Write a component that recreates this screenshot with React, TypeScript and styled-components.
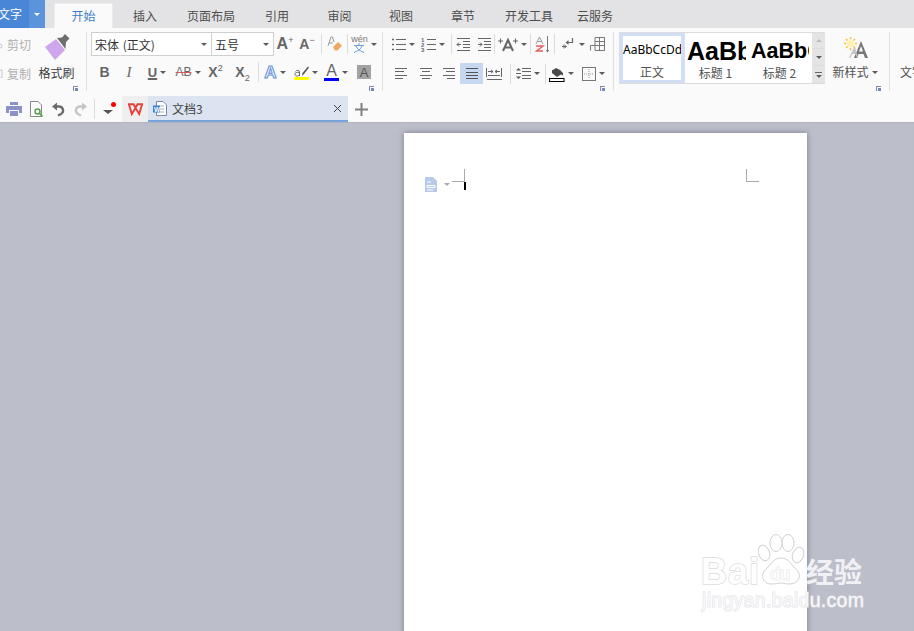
import React from "react";
import styled, { createGlobalStyle } from "styled-components";

const Global = createGlobalStyle`
  html, body { margin: 0; padding: 0; width: 914px; height: 631px; overflow: hidden; }
  body { font-family: "Noto Sans CJK SC", "Liberation Sans", sans-serif; }
  * { box-sizing: border-box; }
`;

const Shell = styled.div`
  position: relative;
  width: 914px;
  height: 631px;
  display: flex;
  flex-direction: column;
  overflow: hidden;
  background: #bcbfca;
`;

const TabBar = styled.div`
  height: 28px;
  flex: none;
  display: flex;
  background: #e3e3e5;
`;
const AppButton = styled.div`
  width: 45px;
  height: 28px;
  flex: none;
  display: flex;
  background: #4a86d8;
  color: #fff;
  font-size: 12px;
  overflow: hidden;
`;
const AppName = styled.span`
  width: 31px;
  flex: none;
  margin-left: -2px;
  white-space: nowrap;
  line-height: 27px;
`;
const AppCaret = styled.span`
  flex: 1;
  background: #5b93dc;
  display: flex;
  align-items: center;
  justify-content: center;
  &::after {
    content: "";
    border: 3px solid transparent;
    border-top: 3px solid #fff;
    border-bottom: 0;
  }
`;
const Tabs = styled.div`
  display: flex;
  margin-left: 9px;
`;
const Tab = styled.div<{ $w: number; $active?: boolean }>`
  width: ${(p) => p.$w}px;
  flex: none;
  text-align: center;
  font-size: 12px;
  margin-top: 3px;
  height: 25px;
  line-height: 26px;
  white-space: nowrap;
  color: ${(p) => (p.$active ? "#3f7cc8" : "#4d4d4d")};
  background: ${(p) => (p.$active ? "#fafafa" : "transparent")};
  box-shadow: ${(p) => (p.$active ? "inset 0 1px 0 #ececec, inset 1px 0 0 #ececec, inset -1px 0 0 #ececec" : "none")};
`;

const Ribbon = styled.div`
  height: 68px;
  flex: none;
  display: flex;
  background: #fafafa;
  padding-top: 4px;
  overflow: hidden;
`;
const Group = styled.div<{ $w: number }>`
  position: relative;
  width: ${(p) => p.$w}px;
  flex: none;
  height: 59px;
  display: flex;
  border-right: 1px solid #e0e0e0;
`;
const Launcher = styled.span`
  position: absolute;
  right: 8px;
  bottom: 0;
  width: 5px;
  height: 5px;
  border-top: 1px solid #7d8ca3;
  border-left: 1px solid #7d8ca3;
  &::after {
    content: "";
    position: absolute;
    right: 0;
    bottom: 0;
    width: 3px;
    height: 3px;
    background: #6f8bb5;
  }
`;

const ClipColumn = styled.div`
  width: 33px;
  flex: none;
  display: flex;
  flex-direction: column;
  gap: 5px;
  overflow: hidden;
`;
const ClipItem = styled.div`
  height: 24px;
  display: flex;
  align-items: center;
  gap: 4px;
  font-size: 12px;
  color: #b0b0b0;
  white-space: nowrap;
`;
const PainterColumn = styled.div`
  width: 47px;
  flex: none;
  display: flex;
  flex-direction: column;
  align-items: center;
  padding-top: 2px;
`;
const PainterLabel = styled.span`
  font-size: 12px;
  color: #3a3a3a;
  line-height: 16px;
  margin-top: 4px;
  white-space: nowrap;
`;

const Rows = styled.div<{ $pl: number }>`
  flex: 1;
  display: flex;
  flex-direction: column;
  padding-left: ${(p) => p.$pl}px;
`;
const Row = styled.div<{ $h: number }>`
  height: ${(p) => p.$h}px;
  display: flex;
  align-items: center;
  flex: none;
`;
const Combo = styled.div<{ $w: number }>`
  width: ${(p) => p.$w}px;
  height: 24px;
  flex: none;
  display: flex;
  align-items: center;
  justify-content: space-between;
  border: 1px solid #cfcfcf;
  margin-left: -1px;
  padding: 0 4px 0 3px;
  background: #fff;
  font-size: 12px;
  word-spacing: 1px;
  color: #333;
  white-space: nowrap;
`;
const Caret = styled.i<{ $color?: string; $wide?: boolean }>`
  display: block;
  flex: none;
  width: 0;
  height: 0;
  border-style: solid;
  border-color: transparent;
  border-width: ${(p) => (p.$wide ? "4px 5px 0" : "3px 3px 0")};
  border-top-color: ${(p) => p.$color ?? "#5a5a5a"};
`;
const Tool = styled.div<{ $w: number; $active?: boolean }>`
  width: ${(p) => p.$w}px;
  height: 21px;
  flex: none;
  display: flex;
  align-items: center;
  justify-content: center;
  gap: 3px;
  color: #666;
  background: ${(p) => (p.$active ? "#c6d8f0" : "transparent")};
`;
const VSep = styled.div<{ $l?: number; $r?: number }>`
  width: 1px;
  height: 20px;
  flex: none;
  background: #dcdcdc;
  margin: 0 ${(p) => p.$r ?? 0}px 0 ${(p) => p.$l ?? 0}px;
`;
const Glyph = styled.span<{
  $size?: number;
  $weight?: number;
  $italic?: boolean;
  $under?: boolean;
  $strike?: boolean;
  $family?: string;
  $color?: string;
  $outline?: string;
}>`
  font-family: ${(p) => p.$family ?? `"Liberation Sans", sans-serif`};
  font-size: ${(p) => p.$size ?? 14}px;
  font-weight: ${(p) => p.$weight ?? 700};
  font-style: ${(p) => (p.$italic ? "italic" : "normal")};
  color: ${(p) => p.$color ?? "#666"};
  -webkit-text-stroke: ${(p) => (p.$outline ? `1px ${p.$outline}` : "0")};
  line-height: 1;
  white-space: nowrap;
  text-decoration: ${(p) => (p.$under ? "underline" : p.$strike ? "line-through" : "none")};
  text-decoration-color: ${(p) => (p.$strike ? "#d85a5a" : "inherit")};
  text-decoration-thickness: ${(p) => (p.$under ? 2 : 1)}px;
  text-underline-offset: 1px;
  sup, sub { font-size: 9px; font-weight: 400; line-height: 0; }
`;
const SmallStack = styled.span`
  display: flex;
  flex-direction: column;
  align-items: center;
  font-family: "Liberation Sans", sans-serif;
  font-size: 9px;
  line-height: 8px;
  color: #777;
`;
const ColorA = styled.span<{ $bar: string }>`
  display: flex;
  flex-direction: column;
  align-items: center;
  font-family: "Liberation Sans", sans-serif;
  font-size: 16px;
  line-height: 15px;
  color: #666;
  &::after {
    content: "";
    width: 15px;
    height: 3px;
    background: ${(p) => p.$bar};
  }
`;
const Highlight = styled.span`
  display: flex;
  flex-direction: column;
  align-items: center;
  &::after {
    content: "";
    width: 15px;
    height: 3px;
    background: #ffff00;
  }
`;
const BoxA = styled.span`
  width: 14px;
  height: 14px;
  display: flex;
  align-items: center;
  justify-content: center;
  background: #a3a3a3;
  color: #555;
  font-family: "Liberation Sans", sans-serif;
  font-size: 13px;
`;

const Gallery = styled.div`
  margin-left: 5px;
  width: 206px;
  height: 52px;
  flex: none;
  display: flex;
  background: #dcdcdc;
  padding: 1px 0;
`;
const StyleCard = styled.div<{ $w: number; $selected?: boolean }>`
  width: ${(p) => p.$w}px;
  flex: none;
  overflow: hidden;
  background: #fff;
  display: flex;
  flex-direction: column;
  align-items: center;
  border: ${(p) => (p.$selected ? "solid #d2def5" : "none")};
  border-width: 3px 4px;
`;
const StyleSample = styled.div<{ $size: number; $bold?: boolean; $h: number; $lh: number; $w: number; $ml: number; $family?: string }>`
  align-self: flex-start;
  flex: none;
  width: ${(p) => p.$w}px;
  margin-left: ${(p) => p.$ml}px;
  height: ${(p) => p.$h}px;
  font-family: ${(p) => p.$family ?? `"Liberation Sans", sans-serif`};
  font-size: ${(p) => p.$size}px;
  font-weight: ${(p) => (p.$bold ? 700 : 400)};
  color: #000;
  overflow: hidden;
  white-space: nowrap;
  line-height: ${(p) => p.$lh}px;
`;
const StyleLabel = styled.div<{ $mr?: number }>`
  font-size: 12px;
  color: #505050;
  line-height: 16px;
  margin-right: ${(p) => p.$mr ?? 0}px;
  white-space: nowrap;
`;
const Spin = styled.div`
  width: 13px;
  flex: none;
  display: flex;
  flex-direction: column;
  gap: 1px;
`;
const SpinButton = styled.div<{ $h: number }>`
  height: ${(p) => p.$h}px;
  display: flex;
  flex-direction: column;
  align-items: center;
  justify-content: center;
  gap: 2px;
  background: #e4e4e4;
`;
const UpCaret = styled.i`
  display: block;
  border: 3px solid transparent;
  border-top: 0;
  border-bottom: 3px solid #bdbdbd;
`;
const Dash = styled.i`
  display: block;
  width: 7px;
  height: 1px;
  background: #666;
`;
const NewStyle = styled.div`
  width: 64px;
  flex: none;
  display: flex;
  flex-direction: column;
  align-items: center;
  padding: 5px 4px 0 0;
`;
const NewLabel = styled.div`
  display: flex;
  align-items: center;
  gap: 3px;
  margin-top: 5px;
  font-size: 12px;
  line-height: 16px;
  color: #505050;
  white-space: nowrap;
`;
const TextTail = styled.div`
  padding: 32px 0 0 10px;
  font-size: 12px;
  line-height: 16px;
  color: #505050;
  white-space: nowrap;
`;

const QuickBar = styled.div`
  height: 26px;
  flex: none;
  display: flex;
  align-items: stretch;
  background: #fafafa;
  padding-left: 5px;
`;
const QuickTool = styled.div<{ $w: number }>`
  width: ${(p) => p.$w}px;
  flex: none;
  display: flex;
  align-items: center;
  justify-content: center;
`;
const QuickSep = styled.div`
  width: 1px;
  height: 20px;
  align-self: center;
  background: #dcdcdc;
  margin: 0 3px 0 1px;
  flex: none;
`;
const DropDot = styled.div`
  position: relative;
  width: 24px;
  flex: none;
  display: flex;
  align-items: center;
  justify-content: center;
  padding: 5px 4px 0 0;
  &::after {
    content: "";
    position: absolute;
    left: 13px;
    top: 6px;
    width: 5px;
    height: 5px;
    border-radius: 50%;
    background: #f00;
  }
`;
const WpsBox = styled.div`
  width: 26px;
  flex: none;
  display: flex;
  align-items: center;
  justify-content: center;
  background: #efefef;
`;
const DocTab = styled.div`
  width: 200px;
  flex: none;
  display: flex;
  align-items: center;
  background: #dbe4f0;
  border-bottom: 2px solid #7aa5dc;
  padding: 0 6px 0 5px;
  font-size: 12px;
  color: #444;
`;
const DocName = styled.span`
  margin-left: 5px;
  flex: 1;
`;
const PlusTool = styled.div`
  width: 26px;
  flex: none;
  display: flex;
  align-items: center;
  justify-content: center;
`;

const Canvas = styled.div`
  flex: 1;
  min-height: 0;
  padding: 11px 0 0 404px;
  background: #bcbfca;
  box-shadow: inset 0 1px 1px #b0b3bd;
`;
const Page = styled.div`
  width: 403px;
  height: 520px;
  background: #fff;
  box-shadow: 0 0 6px rgba(70, 72, 85, 0.55);
  padding: 36px 48px 0 20px;
  display: flex;
  justify-content: space-between;
  align-items: flex-start;
`;
const MarginLeft = styled.div`
  display: flex;
  align-items: flex-start;
`;
const DocMark = styled.div`
  margin-top: 8px;
  display: flex;
  align-items: center;
  gap: 6px;
`;
const CornerLeft = styled.div`
  position: relative;
  margin-left: 2px;
  width: 13px;
  height: 13px;
  border-right: 1px solid #aaa;
  border-bottom: 1px solid #aaa;
  &::after {
    content: "";
    position: absolute;
    right: -2px;
    top: 13px;
    width: 2px;
    height: 8px;
    background: #000;
  }
`;
const CornerRight = styled.div`
  width: 13px;
  height: 13px;
  border-left: 1px solid #aaa;
  border-bottom: 1px solid #aaa;
`;

const Watermark = styled.div`
  position: absolute;
  left: 700px;
  top: 530px;
  width: 170px;
  height: 84px;
  display: flex;
  flex-direction: column;
  color: #f1f1f5;
`;
const WaterTop = styled.div`
  display: flex;
  align-items: flex-end;
  height: 58px;
`;
const WaterBai = styled.span`
  font-family: "Liberation Sans", sans-serif;
  font-weight: 700;
  font-size: 36px;
  line-height: 32px;
  letter-spacing: 1px;
  width: 57px;
  margin-left: 1px;
  flex: none;
  color: #fff;
  -webkit-text-stroke: 1.5px #dcdce0;
  paint-order: stroke fill;
`;
const Paw = styled.div`
  position: relative;
  width: 47px;
  height: 56px;
  flex: none;
`;
const WaterDu = styled.span`
  position: absolute;
  left: 12px;
  bottom: 5px;
  font-family: "Liberation Sans", sans-serif;
  font-size: 18px;
  line-height: 18px;
  color: #fff;
  -webkit-text-stroke: 1px #dcdce0;
  paint-order: stroke fill;
`;
const WaterCn = styled.span`
  font-size: 28px;
  line-height: 30px;
  font-weight: 700;
  white-space: nowrap;
  margin-left: 1px;
  margin-bottom: 2px;
`;
const WaterUrl = styled.div`
  margin: 1px 0 0 2px;
  font-family: "Liberation Sans", sans-serif;
  font-size: 19.5px;
  line-height: 22px;
  letter-spacing: 0.3px;
  white-space: nowrap;
  -webkit-text-stroke: 1px #dfdfe3;
  paint-order: stroke fill;
  color: #f7f7fa;
`;

type P = { children: React.ReactNode; w?: number; h?: number; vb?: string };
const Ico = ({ children, w = 16, h = 16, vb }: P) => (
  <svg width={w} height={h} viewBox={vb ?? `0 0 ${w} ${h}`} fill="none" style={{ display: "block", flex: "none" }}>
    {children}
  </svg>
);
const Lines = ({ ys, x1, x2, c = "#666" }: { ys: number[]; x1: number | number[]; x2: number | number[]; c?: string }) => (
  <>
    {ys.map((y, i) => (
      <path key={i} d={`M${Array.isArray(x1) ? x1[i] : x1} ${y + 0.5}H${Array.isArray(x2) ? x2[i] : x2}`} stroke={c} />
    ))}
  </>
);
const Align = ({ kind }: { kind: "l" | "c" | "r" | "j" }) => {
  const map = {
    l: [[1, 1, 1, 1], [13, 10, 13, 9]],
    c: [[1, 3, 1, 3], [13, 11, 13, 11]],
    r: [[1, 4, 1, 5], [13, 13, 13, 13]],
    j: [[1, 1, 1, 1], [13, 13, 13, 13]],
  }[kind];
  return (
    <Ico w={14} h={13}>
      <Lines ys={kind === "j" ? [1, 5, 8, 11] : [1, 4, 8, 11]} x1={map[0]} x2={map[1]} c={kind === "j" ? "#555" : "#666"} />
    </Ico>
  );
};
const Bullets = () => (
  <Ico w={15} h={14}>
    <Lines ys={[2, 7, 12]} x1={5} x2={15} />
    <path d="M1 2.500h2M1 7.500h2M1 12.500h2M2 1.500v2M2 6.500v2M2 11.500v2" stroke="#666" />
  </Ico>
);
const Numbers = () => (
  <Ico w={15} h={15}>
    <Lines ys={[2, 7, 12]} x1={6} x2={15} />
    <text x="0" y="5" fontSize="6" fontFamily="Liberation Sans" fontWeight="700" fill="#666">1</text>
    <text x="0" y="10" fontSize="6" fontFamily="Liberation Sans" fontWeight="700" fill="#666">2</text>
    <text x="0" y="15" fontSize="6" fontFamily="Liberation Sans" fontWeight="700" fill="#666">3</text>
  </Ico>
);
const Indent = ({ out }: { out?: boolean }) => (
  <Ico w={14} h={14}>
    <Lines ys={[1, 13]} x1={1} x2={14} />
    <Lines ys={[4, 7, 10]} x1={7} x2={14} />
    <path d={out ? "M5 7.500H1M3 5.500l-2 2 2 2" : "M1 7.500h4M3 5.500l2 2-2 2"} stroke="#666" />
  </Ico>
);
const TextSize = () => (
  <Ico w={20} h={15}>
    <path d="M5 14 10 3l5 11M7 10.500h6" stroke="#666" strokeWidth="2" />
    <path d="M0 4h5M2.500 1.500v5M15 4h5M17.500 1.500v5" stroke="#666" />
  </Ico>
);
const Sort = () => (
  <Ico w={16} h={17}>
    <path d="M1 8 4.500 1 8 8M2.500 5.500h4" stroke="#999" />
    <path d="M1 10h7L1.500 15H8" stroke="#e4605f" strokeWidth="1.500" />
    <path d="M12.500 0v15" stroke="#777" />
    <path d="M11 14h3l-1.500 2.500z" fill="#666" />
  </Ico>
);
const Enter = () => (
  <Ico w={15} h={14}>
    <path d="M11.500 1V5.500H6" stroke="#666" strokeWidth="1.200" />
    <path d="M7.500 3 4.500 5.500 7.500 8z" fill="#666" />
    <path d="M1 9.500h4M3 7.500v4" stroke="#666" />
    <path d="M4 8v3l2-1.500z" fill="#666" />
  </Ico>
);
const TableIco = () => (
  <Ico w={15} h={14}>
    <path d="M.5 13.500V8.500H5M5 .5h9.500v13H5zM5 4.500h9.500M5 8.500h9.500M9.500 .5v13" stroke="#777" />
  </Ico>
);
const Eraser = () => (
  <Ico w={16} h={16}>
    <path d="M1 10 4 1h1.500L7 6" stroke="#999" />
    <path d="M2 7h4" stroke="#999" />
    <path d="M6 11 11 6l4 3.500L10.500 14.500H8z" fill="#f0a860" />
  </Ico>
);
const WenChar = () => (
  <Ico w={12} h={10}>
    <path d="M6 0v2M1 2.500h10M3 3c1 3 4 5 8 6.500M9 3c-1 3-4 5-8 6.500" stroke="#6a9ad8" />
  </Ico>
);
const Spacing = () => (
  <Ico w={15} h={13}>
    <Lines ys={[1, 4, 8, 11]} x1={6} x2={15} />
    <path d="M0 3.500 2.500 1 5 3.500zM0 9.500 2.500 12 5 9.500z" fill="#555" />
    <path d="M0 6.500h5" stroke="#666" />
  </Ico>
);
const Dist = () => (
  <Ico w={16} h={14}>
    <Lines ys={[12]} x1={1} x2={16} />
    <path d="M.5 1v9M15.500 1v9M2 4.500h5M9 4.500h5M5 3l2 1.500L5 6M11 3 9 4.500 11 6" stroke="#666" />
    <Lines ys={[8]} x1={2} x2={14} />
  </Ico>
);
const Bucket = () => (
  <Ico w={16} h={16}>
    <path d="M3 4h1l3-2 4 2 3 3v3l-1-1.500-2 .5-3 2-5-4z" fill="#4a4a4a" />
    <rect x=".5" y="12.500" width="14.500" height="3" fill="#fff" stroke="#000" />
  </Ico>
);
const Borders = () => (
  <Ico w={14} h={14}>
    <rect x=".5" y=".5" width="13" height="13" stroke="#777" />
    <path d="M7 2v10M2 7h10" stroke="#999" strokeDasharray="1 1" />
  </Ico>
);
const BigBrush = () => (
  <Ico w={26} h={27}>
    <path d="M1 13 12 5 21 16 11 26z" fill="#cfa6ee" />
    <path d="M13 4 18 3.500 21 0l4.500 4.500L22 8l-.5 7z" fill="#6e6e6e" />
  </Ico>
);
const Highlighter = () => (
  <Ico w={15} h={12}>
    <path d="M1.500 6.500C2 5 5.500 5 5.500 7v4M5.500 8c-1-1-5-1-4.500 1.500S5 11 5.500 9.500" stroke="#666" />
    <path d="M8 11 8.500 8 14 1.500l1 1L10 9z" fill="#555" />
  </Ico>
);
const Printer = () => (
  <Ico w={16} h={14}>
    <path d="M4 0h8v3H4zM0 4h16v7h-3V8H3v3H0zM4 9h8v5H4z" fill="#8c91c7" />
  </Ico>
);
const Preview = () => (
  <Ico w={15} h={17}>
    <path d="M1.500.5H9L12.500 4v11.500h-11z" fill="#fff" stroke="#888" />
    <circle cx="8.500" cy="10.500" r="2.500" stroke="#55a04a" strokeWidth="1.500" />
    <path d="M10.500 12.500l3 3" stroke="#55a04a" strokeWidth="1.700" />
  </Ico>
);
const Undo = ({ c, flip }: { c: string; flip?: boolean }) => (
  <Ico w={13} h={15}>
    <g transform={flip ? "matrix(-1 0 0 1 13 0)" : undefined}>
      <path d="M0 4.500 5 .5v8z" fill={c} />
      <path d="M4 4.500h3a4 4 0 0 1 2 7.500l-3 1.500" stroke={c} strokeWidth="2.400" />
    </g>
  </Ico>
);
const WpsW = () => (
  <Ico w={17} h={13}>
    <path d="M1 1.300H6.500L8.500 4.800 10.500 1.300H16M2 1.500 4.800 11 8.500 5 12.200 11 15 1.500" stroke="#e5403c" strokeWidth="1.900" />
  </Ico>
);
const WordDoc = () => (
  <Ico w={14} h={15}>
    <path d="M3.500.5H10L13.500 4v10.500h-10z" fill="#fff" stroke="#7f8aa0" />
    <path d="M6 5h5M7 8h4M7 11h4" stroke="#a3aec0" />
    <rect x="0" y="4.500" width="7" height="7" fill="#3e7fd0" />
    <text x="1" y="10.500" fontSize="6.500" fontWeight="700" fontFamily="Liberation Sans" fill="#fff">W</text>
  </Ico>
);
const Close = () => (
  <Ico w={9} h={9}>
    <path d="M1 1l7 7M8 1 1 8" stroke="#444" />
  </Ico>
);
const Plus = () => (
  <Ico w={13} h={13}>
    <path d="M6.500 0v13M0 6.500h13" stroke="#808080" strokeWidth="2" />
  </Ico>
);
const PageMark = () => (
  <Ico w={14} h={15}>
    <path d="M1 0h8l4 4v11H1z" fill="#b6cbe8" />
    <path d="M3 5h4M3 8.500h8v2H3zM3 13h6" stroke="#fff" />
  </Ico>
);
const Sparkle = () => (
  <Ico w={30} h={22}>
    <path d="M16 4 9 21h3l1.500-4h5l1.500 4h3l-7-17zm0 5 2 5.500h-4z" fill="#777" transform="translate(5 0)" fillRule="evenodd" />
    <path d="M15 8 9 21h1.500l1.500-4h3.500l1.500 4h1l-3.500-13z" fill="#c6c6c6" />
    <circle cx="10.500" cy="6.500" r="3.500" fill="#fff2b0" />
    <path d="M10.500 0v2.200M10.500 11v2.200M4 6.500h2.200M15 6.500h2.200M6 2l1.500 1.500M15 2l-1.500 1.500M6 11l1.500-1.500M15 11l-1.500-1.500" stroke="#f2c43a" strokeWidth="1.500" />
  </Ico>
);
const CutStub = () => (
  <Ico w={3} h={10}>
    <circle cx="0" cy="7" r="2" stroke="#c8c8c8" />
  </Ico>
);
const CopyStub = () => (
  <Ico w={3} h={10}>
    <rect x="-4" y="2" width="6" height="8" stroke="#c8c8c8" />
  </Ico>
);

export default function App() {
  return (
    <Shell>
      <Global />
      <TabBar>
        <AppButton>
          <AppName>文字</AppName>
          <AppCaret />
        </AppButton>
        <Tabs>
          <Tab $w={59} $active>开始</Tab>
          <Tab $w={64}>插入</Tab>
          <Tab $w={68}>页面布局</Tab>
          <Tab $w={64}>引用</Tab>
          <Tab $w={61}>审阅</Tab>
          <Tab $w={62}>视图</Tab>
          <Tab $w={62}>章节</Tab>
          <Tab $w={70}>开发工具</Tab>
          <Tab $w={62}>云服务</Tab>
        </Tabs>
      </TabBar>

      <Ribbon>
        <Group $w={87}>
          <ClipColumn>
            <ClipItem><CutStub />剪切</ClipItem>
            <ClipItem><CopyStub />复制</ClipItem>
          </ClipColumn>
          <PainterColumn>
            <BigBrush />
            <PainterLabel>格式刷</PainterLabel>
          </PainterColumn>
          <Launcher />
        </Group>

        <Group $w={296}>
          <Rows $pl={5}>
            <Row $h={24}>
              <Combo $w={121}>宋体 (正文)<Caret /></Combo>
              <Combo $w={63}>五号<Caret /></Combo>
              <Tool $w={22}><Glyph $size={16} $weight={700}>A<sup>+</sup></Glyph></Tool>
              <Tool $w={22}><Glyph $size={14} $weight={700}>A<sup>−</sup></Glyph></Tool>
              <VSep $l={3} $r={3} />
              <Tool $w={20}><Eraser /></Tool>
              <VSep $l={2} $r={2} />
              <Tool $w={28}>
                <SmallStack>wén<WenChar /></SmallStack>
                <Caret />
              </Tool>
            </Row>
            <Row $h={32}>
              <Tool $w={25}><Glyph $size={14}>B</Glyph></Tool>
              <Tool $w={24}><Glyph $size={15} $weight={400} $italic $family={`"Liberation Serif", serif`}>I</Glyph></Tool>
              <Tool $w={32}><Glyph $size={13} $under>U</Glyph><Caret /></Tool>
              <Tool $w={30}><Glyph $size={12} $weight={400} $strike>AB</Glyph><Caret /></Tool>
              <Tool $w={25}><Glyph $size={14}>X<sup>2</sup></Glyph></Tool>
              <Tool $w={29}><Glyph $size={14}>X<sub>2</sub></Glyph></Tool>
              <VSep $l={1} />
              <Tool $w={32}>
                <Glyph $size={17} $color="#fafafa" $outline="#5d8fd8">A</Glyph>
                <Caret />
              </Tool>
              <Tool $w={30}><Highlight><Highlighter /></Highlight><Caret /></Tool>
              <Tool $w={30}><ColorA $bar="#0000ff">A</ColorA><Caret /></Tool>
              <Tool $w={26}><BoxA>A</BoxA></Tool>
            </Row>
          </Rows>
          <Launcher />
        </Group>

        <Group $w={231}>
          <Rows $pl={5}>
            <Row $h={24}>
              <Tool $w={30}><Bullets /><Caret /></Tool>
              <Tool $w={30}><Numbers /><Caret /></Tool>
              <VSep $l={3} />
              <Tool $w={21}><Indent out /></Tool>
              <Tool $w={21}><Indent /></Tool>
              <VSep />
              <Tool $w={35}><TextSize /><Caret /></Tool>
              <VSep />
              <Tool $w={23}><Sort /></Tool>
              <VSep />
              <Tool $w={35}><Enter /><Caret /></Tool>
              <Tool $w={15}><TableIco /></Tool>
            </Row>
            <Row $h={35}>
              <Tool $w={26}><Align kind="l" /></Tool>
              <Tool $w={23}><Align kind="c" /></Tool>
              <Tool $w={23}><Align kind="r" /></Tool>
              <Tool $w={23} $active><Align kind="j" /></Tool>
              <Tool $w={21}><Dist /></Tool>
              <VSep $l={6} />
              <Tool $w={34}><Spacing /><Caret /></Tool>
              <VSep />
              <Tool $w={31}><Bucket /><Caret /></Tool>
              <Tool $w={32}><Borders /><Caret /></Tool>
            </Row>
          </Rows>
          <Launcher />
        </Group>

        <Gallery>
          <StyleCard $w={66} $selected>
            <StyleSample $size={12} $h={28} $lh={28} $w={58} $ml={0} $family={`"Noto Sans", sans-serif`}>AaBbCcDd</StyleSample>
            <StyleLabel>正文</StyleLabel>
          </StyleCard>
          <StyleCard $w={64}>
            <StyleSample $size={25} $bold $h={32} $lh={36} $w={59} $ml={2}>AaBbCc</StyleSample>
            <StyleLabel $mr={3}>标题 1</StyleLabel>
          </StyleCard>
          <StyleCard $w={63}>
            <StyleSample $size={21.5} $bold $h={32} $lh={36} $w={58} $ml={2}>AaBbCc</StyleSample>
            <StyleLabel $mr={2}>标题 2</StyleLabel>
          </StyleCard>
          <Spin>
            <SpinButton $h={15}><UpCaret /></SpinButton>
            <SpinButton $h={16}><Caret /></SpinButton>
            <SpinButton $h={17}><Dash /><Caret /></SpinButton>
          </Spin>
        </Gallery>

        <Group $w={65}>
          <NewStyle>
            <Sparkle />
            <NewLabel>新样式<Caret /></NewLabel>
          </NewStyle>
          <Launcher />
        </Group>
        <TextTail>文字</TextTail>
      </Ribbon>

      <QuickBar>
        <QuickTool $w={18}><Printer /></QuickTool>
        <QuickTool $w={26}><Preview /></QuickTool>
        <QuickTool $w={18}><Undo c="#6b6b6b" /></QuickTool>
        <QuickTool $w={26}><Undo c="#c4c4c4" flip /></QuickTool>
        <QuickSep />
        <DropDot><Caret $color="#555" $wide /></DropDot>
        <WpsBox><WpsW /></WpsBox>
        <DocTab>
          <WordDoc />
          <DocName>文档3</DocName>
          <Close />
        </DocTab>
        <PlusTool><Plus /></PlusTool>
      </QuickBar>

      <Canvas>
        <Page>
          <MarginLeft>
            <DocMark>
              <PageMark />
              <Caret $color="#aaa" />
            </DocMark>
            <CornerLeft />
          </MarginLeft>
          <CornerRight />
        </Page>
      </Canvas>

      <Watermark>
        <WaterTop>
          <WaterBai>Bai</WaterBai>
          <Paw>
            <svg width="47" height="56" viewBox="0 0 47 56" style={{ display: "block" }}>
              <g fill="#fff" fillOpacity="0.85" stroke="#d2d2d6" strokeWidth="1">
                <ellipse cx="6" cy="21" rx="5.500" ry="8" transform="rotate(-20 6 21)" />
                <ellipse cx="18" cy="11" rx="6" ry="8.500" />
                <ellipse cx="30" cy="11" rx="6" ry="8.500" />
                <ellipse cx="40" cy="23" rx="5.500" ry="8" transform="rotate(20 40 23)" />
                <path d="M23 26c8 0 10 7 16 12 5 5 2 14-7 14-5 0-6-1-9-1s-5 1-10 1c-8 0-11-9-6-14 6-5 8-12 16-12z" />
              </g>
            </svg>
            <WaterDu>du</WaterDu>
          </Paw>
          <WaterCn>经验</WaterCn>
        </WaterTop>
        <WaterUrl>jingyan.baidu.com</WaterUrl>
      </Watermark>
    </Shell>
  );
}
